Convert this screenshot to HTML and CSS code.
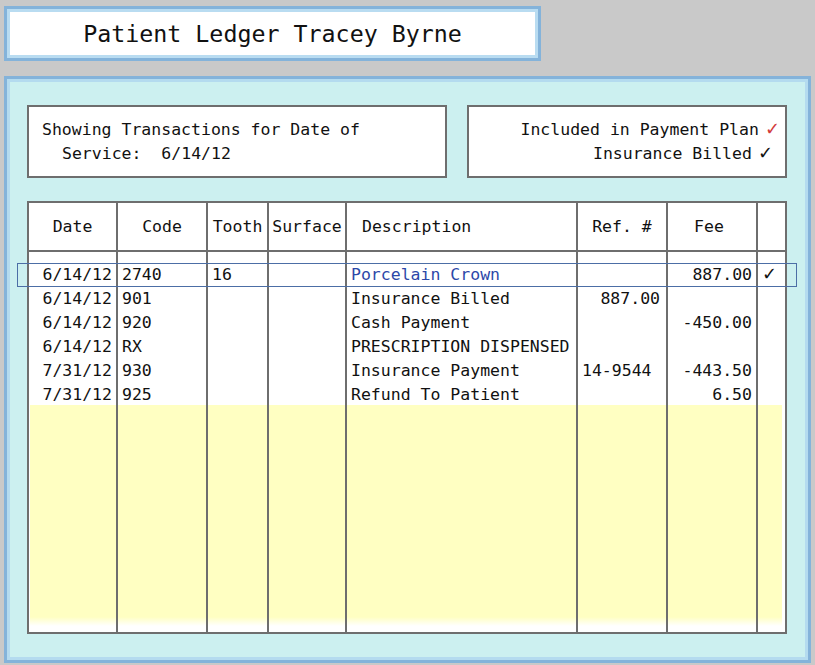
FILE: index.html
```html
<!DOCTYPE html>
<html lang="en">
<head>
  <meta charset="UTF-8" />
  <title>Patient Ledger</title>
  <link rel="stylesheet" href="styles.css">
</head>
<body>

  <div class="title">Patient Ledger Tracey Byrne</div>

  <div class="panel">
    <div class="info-row">
      <div class="info info-left">
        <div>Showing Transactions for Date of</div>
        <div class="indent">Service:&nbsp; 6/14/12</div>
      </div>
      <div class="info info-right">
        <div>Included in Payment Plan<span class="check red">&#10003;</span></div>
        <div class="shift">Insurance Billed<span class="check">&#10003;</span></div>
      </div>
    </div>

    <div class="ledger">
      <div class="row head">
        <div class="cell c">Date</div>
        <div class="cell c">Code</div>
        <div class="cell c">Tooth</div>
        <div class="cell c">Surface</div>
        <div class="cell desc-head">Description</div>
        <div class="cell c">Ref. #</div>
        <div class="cell c fee-head">Fee</div>
        <div class="cell"></div>
      </div>
      <div class="row spacer">
        <div class="cell"></div><div class="cell"></div><div class="cell"></div><div class="cell"></div>
        <div class="cell"></div><div class="cell"></div><div class="cell"></div><div class="cell"></div>
      </div>

      <div class="row line selected">
        <div class="cell r">6/14/12</div>
        <div class="cell">2740</div>
        <div class="cell">16</div>
        <div class="cell"></div>
        <div class="cell blue">Porcelain Crown</div>
        <div class="cell"></div>
        <div class="cell r">887.00</div>
        <div class="cell"><span class="check">&#10003;</span></div>
      </div>
      <div class="row line">
        <div class="cell r">6/14/12</div>
        <div class="cell">901</div>
        <div class="cell"></div>
        <div class="cell"></div>
        <div class="cell">Insurance Billed</div>
        <div class="cell r ref">887.00</div>
        <div class="cell"></div>
        <div class="cell"></div>
      </div>
      <div class="row line">
        <div class="cell r">6/14/12</div>
        <div class="cell">920</div>
        <div class="cell"></div>
        <div class="cell"></div>
        <div class="cell">Cash Payment</div>
        <div class="cell"></div>
        <div class="cell r">-450.00</div>
        <div class="cell"></div>
      </div>
      <div class="row line">
        <div class="cell r">6/14/12</div>
        <div class="cell">RX</div>
        <div class="cell"></div>
        <div class="cell"></div>
        <div class="cell">PRESCRIPTION DISPENSED</div>
        <div class="cell"></div>
        <div class="cell"></div>
        <div class="cell"></div>
      </div>
      <div class="row line">
        <div class="cell r">7/31/12</div>
        <div class="cell">930</div>
        <div class="cell"></div>
        <div class="cell"></div>
        <div class="cell">Insurance Payment</div>
        <div class="cell">14-9544</div>
        <div class="cell r">-443.50</div>
        <div class="cell"></div>
      </div>
      <div class="row line">
        <div class="cell r">7/31/12</div>
        <div class="cell">925</div>
        <div class="cell"></div>
        <div class="cell"></div>
        <div class="cell">Refund To Patient</div>
        <div class="cell"></div>
        <div class="cell r">6.50</div>
        <div class="cell"></div>
      </div>

      <!-- empty space below the entries -->
      <div class="row filler">
        <div class="cell"></div><div class="cell"></div><div class="cell"></div><div class="cell"></div>
        <div class="cell"></div><div class="cell"></div><div class="cell"></div><div class="cell"></div>
      </div>
    </div>
  </div>

</body>
</html>
```

FILE: styles.css
```css
html, body {
  margin: 0;
  padding: 0;
}

body {
  background: #c9c9c9;
  font-family: "DejaVu Sans Mono", "Liberation Mono", monospace;
  color: #111;
  width: 815px;
  height: 665px;
  overflow: hidden;
}

.title {
  box-sizing: border-box;
  margin: 6px 0 0 4px;
  width: 537px;
  height: 55px;
  border: 3px solid #84b3da;
  box-shadow: inset 0 0 0 3px #b9dcf1;
  background: #fff;
  display: flex;
  align-items: center;
  justify-content: center;
  font-size: 23.3px;
}

.panel {
  box-sizing: border-box;
  margin: 15px 0 0 4px;
  width: 807px;
  height: 587px;
  border: 3px solid #84b3da;
  box-shadow: inset 0 0 0 3px #b4dbef;
  background: #ccf0f0;
  padding: 26px 21px 26px 20px;
  display: flex;
  flex-direction: column;
}

.info-row {
  display: flex;
  gap: 20px;
  height: 73px;
}

.info {
  box-sizing: border-box;
  border: 2px solid #6e6e6e;
  background: #fff;
  font-size: 16.5px;
  line-height: 24px;
  padding-top: 11px;
}

.info-left {
  width: 420px;
  padding-left: 13px;
}

.indent {
  padding-left: 20px;
}

.info-right {
  width: 320px;
  text-align: right;
  padding-right: 5px;
}

.shift {
  padding-right: 7px;
}

.check {
  font-family: "DejaVu Sans", sans-serif;
  font-size: 18px;
  line-height: 0;
}

.info .check {
  margin-left: 6px;
}

.red {
  color: #d23a3a;
}

.ledger {
  box-sizing: border-box;
  margin-top: 23px;
  width: 760px;
  flex: 1;
  border: 2px solid #6e6e6e;
  background: linear-gradient(#ffffc2 0, #ffffc2 calc(100% - 9px), #fff) 1px 202px / 752px 221px no-repeat, #fff;
  display: flex;
  flex-direction: column;
}

.row {
  display: grid;
  grid-template-columns: 89px 90px 61px 78px 231px 90px 90px 27px;
  font-size: 16.5px;
}

.cell {
  box-sizing: border-box;
  border-right: 2px solid #6e6e6e;
  padding: 0 4px;
  white-space: nowrap;
  overflow: visible;
}

.cell:last-child {
  border-right: none;
}

.head {
  height: 47px;
  border-bottom: 2px solid #6e6e6e;
}

.head .cell {
  display: flex;
  align-items: center;
  justify-content: center;
}

.head .desc-head {
  justify-content: flex-start;
  padding-left: 15px;
}

.head .fee-head {
  padding-right: 10px;
}

.spacer {
  height: 11px;
}

.line {
  height: 24px;
  line-height: 23px;
}

.selected {
  position: relative;
}

.selected::after {
  content: "";
  position: absolute;
  top: 0;
  bottom: 0;
  left: -12px;
  right: -12px;
  border: 1px solid #4c6ea6;
  pointer-events: none;
}

.r {
  text-align: right;
}

.ref {
  padding-right: 6px;
}

.blue {
  color: #2c48a8;
}

.filler {
  flex: 1;
}
```
